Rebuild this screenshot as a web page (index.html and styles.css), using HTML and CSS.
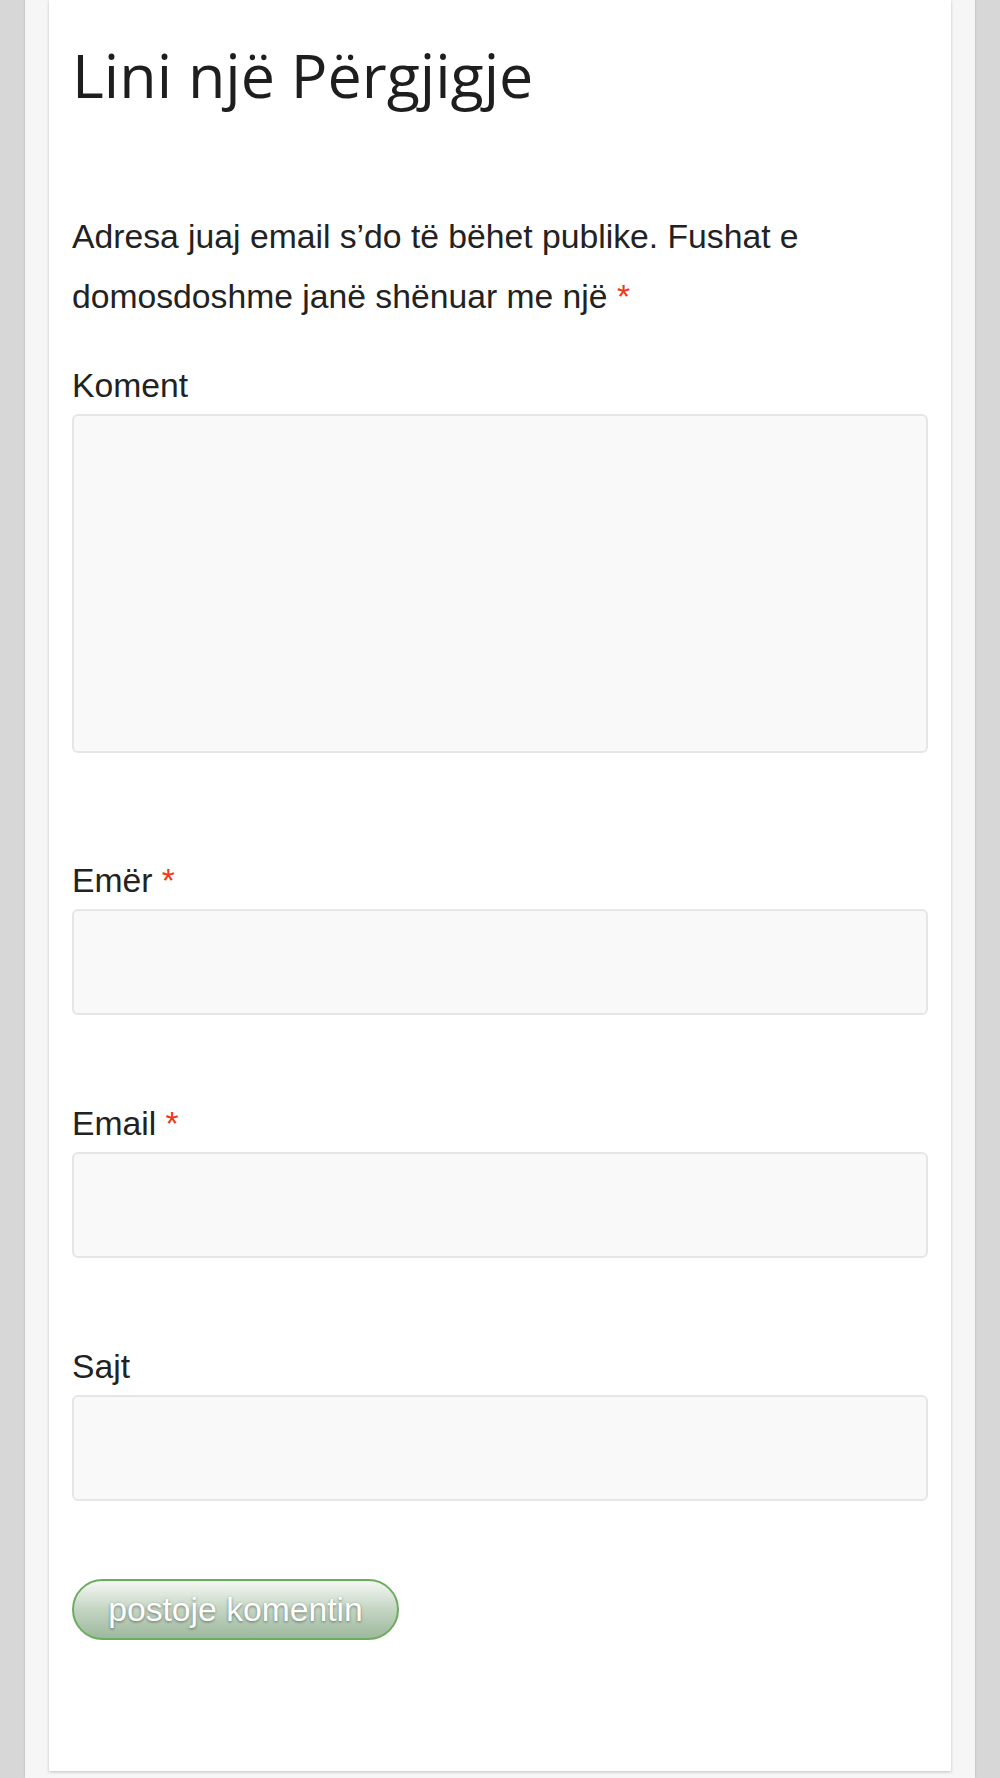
FILE: index.html
```html
<!DOCTYPE html>
<html lang="sq">
<head>
<meta charset="utf-8">
<title>Lini një Përgjigje</title>
<link rel="stylesheet" href="styles.css">
</head>
<body>
<div class="wrap">
  <div class="card">
    <h3 class="reply-title">Lini një Përgjigje</h3>
    <form class="comment-form">
      <p class="notes">Adresa juaj email s’do të bëhet publike. Fushat e domosdoshme janë shënuar me një <span class="req">*</span></p>
      <p class="field field-comment">
        <label class="label" for="comment">Koment</label>
        <textarea id="comment" class="control area"></textarea>
      </p>
      <p class="field field-author">
        <label class="label" for="author">Emër <span class="req">*</span></label>
        <input id="author" class="control" type="text">
      </p>
      <p class="field field-more">
        <label class="label" for="email">Email <span class="req">*</span></label>
        <input id="email" class="control" type="text">
      </p>
      <p class="field field-more">
        <label class="label" for="url">Sajt</label>
        <input id="url" class="control" type="text">
      </p>
      <p class="form-submit">
        <button type="button" class="submit">postoje komentin</button>
      </p>
    </form>
  </div>
</div>
</body>
</html>
```

FILE: styles.css
```css
html, body {
  margin: 0;
  padding: 0;
}

body {
  background: #d7d7d7;
  font-family: "Liberation Sans", Arial, sans-serif;
  color: #222;
}

.wrap {
  width: 950px;
  min-height: 1778px;
  margin: 0 25px;
  padding: 0 24px;
  box-sizing: border-box;
  background: #f6f6f6;
  box-shadow: 0 0 2px rgba(0, 0, 0, 0.18);
}

.card {
  background: #fff;
  padding: 0 23px 131px;
  box-shadow: 0 1px 3px rgba(0, 0, 0, 0.22);
  overflow: hidden;
}

.reply-title {
  margin: 38px 0 0;
  font-family: "Open Sans", "Noto Sans", sans-serif;
  font-weight: 400;
  font-size: 61px;
  line-height: 73px;
  color: #1e1e1e;
}

.comment-form {
  margin: 0;
}

.notes {
  margin: 95px 0 0;
  font-size: 33.7px;
  line-height: 60px;
}

.req {
  color: #f0381a;
}

.field {
  margin: 0;
}

.field-comment {
  margin-top: 39px;
}

.field-author {
  margin-top: 107px;
}

.field-more {
  margin-top: 88px;
}

.label {
  display: block;
  font-size: 33.7px;
  line-height: 40px;
  margin-bottom: 9px;
}

.control {
  display: block;
  width: 100%;
  height: 106px;
  box-sizing: border-box;
  margin: 0;
  border: 2px solid #e6e6e6;
  border-radius: 6px;
  background: #f9f9f9;
  font: inherit;
  outline: none;
}

.area {
  height: 339px;
  resize: none;
}

.form-submit {
  margin: 78px 0 0;
}

.submit {
  display: block;
  width: 327px;
  height: 61px;
  margin: 0;
  padding: 0;
  border: 2px solid #6aad5e;
  border-radius: 31px;
  background: linear-gradient(to bottom, #f5f8f4 0%, #c8d8c7 45%, #9db89c 100%);
  color: #fff;
  font-family: "Liberation Sans", Arial, sans-serif;
  font-size: 33.7px;
  line-height: 57px;
  text-shadow: 0 1px 3px rgba(0, 0, 0, 0.45);
  text-align: center;
}
```
